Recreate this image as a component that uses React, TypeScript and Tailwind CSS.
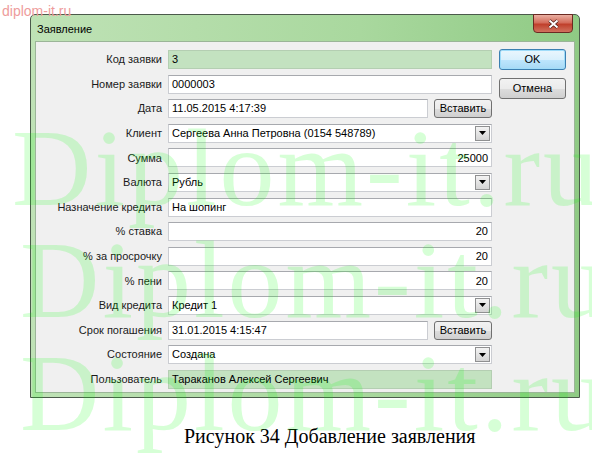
import React from "react";

type Kind = "ro" | "text" | "num" | "combo" | "date";

const rows: { label: string; value: string; kind: Kind }[] = [
  { label: "Код заявки", value: "3", kind: "ro" },
  { label: "Номер заявки", value: "0000003", kind: "text" },
  { label: "Дата", value: "11.05.2015 4:17:39", kind: "date" },
  { label: "Клиент", value: "Сергеева Анна Петровна (0154 548789)", kind: "combo" },
  { label: "Сумма", value: "25000", kind: "num" },
  { label: "Валюта", value: "Рубль", kind: "combo" },
  { label: "Назначение кредита", value: "На шопинг", kind: "text" },
  { label: "% ставка", value: "20", kind: "num" },
  { label: "% за просрочку", value: "20", kind: "num" },
  { label: "% пени", value: "20", kind: "num" },
  { label: "Вид кредита", value: "Кредит 1", kind: "combo" },
  { label: "Срок погашения", value: "31.01.2015 4:15:47", kind: "date" },
  { label: "Состояние", value: "Создана", kind: "combo" },
  { label: "Пользователь", value: "Тараканов Алексей Сергеевич", kind: "ro" },
];

const winBtn =
  "flex items-center justify-center rounded-[3px] border border-[#707070] bg-[linear-gradient(#f2f2f2_0%,#ebebeb_50%,#dddddd_51%,#cfcfcf_100%)] text-[11px] text-black";

function DropButton() {
  return (
    <div className="flex h-[15px] w-[15px] items-center justify-center border border-[#8f9091] bg-[linear-gradient(#f3f3f3,#d4d4d4)]">
      <svg width="7" height="4" viewBox="0 0 7 4">
        <path d="M0 0h7L3.5 4z" fill="#000" />
      </svg>
    </div>
  );
}

function Field({ value, kind }: { value: string; kind: Kind }) {
  const box =
    "flex h-[19px] items-center border border-[#cbcdd2] border-t-[#a7a9ae] bg-white px-[3px] text-black";

  if (kind === "ro") {
    return (
      <div className="flex h-[19px] w-[324px] items-center border border-[#b4ceb2] bg-[#c3e2c0] px-[3px] text-black">
        {value}
      </div>
    );
  }
  if (kind === "date") {
    return (
      <div className="flex w-[324px] items-center justify-between">
        <div className={`${box} w-[260px]`}>{value}</div>
        <div className={`${winBtn} h-[19px] w-[58px]`}>Вставить</div>
      </div>
    );
  }
  if (kind === "combo") {
    return (
      <div className={`${box} w-[324px] justify-between pr-[1px]`}>
        <span>{value}</span>
        <DropButton />
      </div>
    );
  }
  return (
    <div className={`${box} w-[324px] ${kind === "num" ? "justify-end" : ""}`}>
      {value}
    </div>
  );
}

export default function App() {
  return (
    <div className="relative h-[460px] w-[592px] overflow-hidden bg-white font-['Liberation_Sans',Arial,sans-serif]">
      <div className="absolute left-[2px] top-[1px] text-[14px] text-[#ee9c9c]">
        diplom-it.ru
      </div>

      <div className="pl-[30px] pt-[14px]">
        {/* window */}
        <div className="flex h-[384px] w-[550px] flex-col rounded-t-[5px] border border-[#4b5a4b] bg-[linear-gradient(90deg,#bfe2b6,#a9d89e_60%,#8fca84)] px-[4px] pb-[4px]">
          <div className="flex h-[26px] items-start justify-between">
            <span className="pl-[2px] pt-[6px] text-[11px] text-black">Заявление</span>
            <div className="-mt-[1px] mr-[2px] flex h-[19px] w-[40px] items-center justify-center rounded-b-[4px] border border-[#6b2a22] bg-[linear-gradient(#eab0a2,#d46c5b_45%,#c0402c_55%,#d0725e)]">
              <svg width="11" height="10" viewBox="0 0 11 10">
                <path d="M1.5 1.5l8 7M9.5 1.5l-8 7" stroke="#4a1a14" strokeWidth="3.4" />
                <path d="M1.5 1.5l8 7M9.5 1.5l-8 7" stroke="#fff" strokeWidth="2" />
              </svg>
            </div>
          </div>

          {/* client area */}
          <div className="flex flex-1 border border-[#9bb598] bg-[#f0f0f0] pt-[8px] text-[11px] text-[#1b1b1b]">
            <div className="flex flex-col gap-[5.6px]">
              {rows.map((r) => (
                <div key={r.label} className="flex items-center gap-[6px]">
                  <span className="w-[126px] text-right">{r.label}</span>
                  <Field value={r.value} kind={r.kind} />
                </div>
              ))}
            </div>
            <div className="ml-[7px] flex flex-col gap-[8px]">
              <div className="-mt-[1px] flex h-[21px] w-[67px] items-center justify-center rounded-[3px] border border-[#3c7fb1] bg-[linear-gradient(#eaf6fd_0%,#d9f0fc_50%,#bee6fd_51%,#a7d9f5_100%)] text-[11px] text-black shadow-[inset_0_0_0_1px_#9fdcf9]">
                OK
              </div>
              <div className={`${winBtn} h-[21px] w-[67px]`}>Отмена</div>
            </div>
          </div>
        </div>
      </div>

      <p className="ml-[184px] mt-[29px] whitespace-nowrap font-['Liberation_Serif','Times_New_Roman',serif] text-[20px] leading-[19px] text-black">
        Рисунок 34 Добавление заявления
      </p>

      {/* watermark */}
      <div className="pointer-events-none absolute inset-0 font-['Liberation_Serif','Times_New_Roman',serif] text-[110px] leading-[110px] tracking-[3px] text-[rgba(0,255,0,0.16)]">
        <div className="absolute left-[12px] top-[113px] whitespace-nowrap">Diplom-it.ru</div>
        <div className="absolute left-[20px] top-[225px] whitespace-nowrap">Diplom-it.ru</div>
        <div className="absolute left-[20px] top-[338px] whitespace-nowrap">Diplom-it.ru</div>
      </div>
    </div>
  );
}
